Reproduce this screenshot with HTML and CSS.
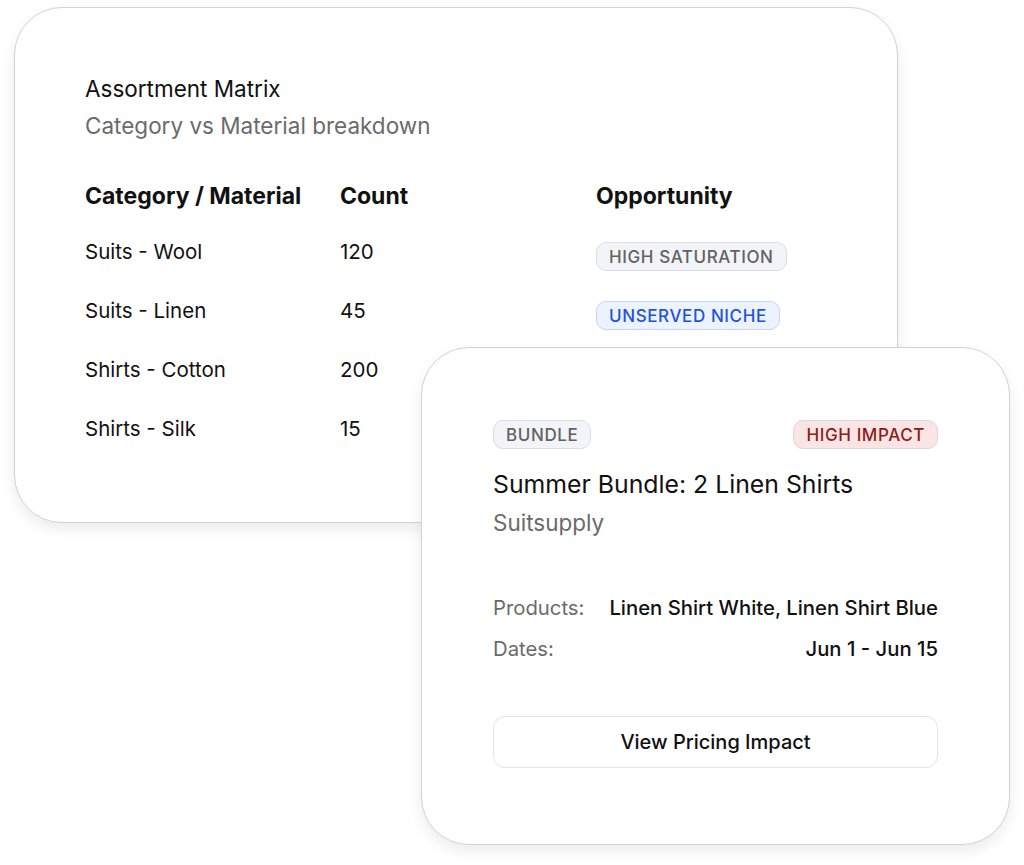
FILE: index.html
```html
<!DOCTYPE html>
<html lang="en">
<head>
<meta charset="utf-8">
<title>Assortment Matrix</title>
<link rel="stylesheet" href="styles.css">
</head>
<body>
<main class="canvas">
  <section class="card matrix">
    <h1 class="title">Assortment Matrix</h1>
    <p class="subtitle">Category vs Material breakdown</p>
    <div class="table">
      <div class="row head">
        <span>Category / Material</span>
        <span>Count</span>
        <span>Opportunity</span>
      </div>
      <div class="row">
        <span>Suits - Wool</span>
        <span>120</span>
        <span class="badge-cell"><span class="badge gray">High Saturation</span></span>
      </div>
      <div class="row">
        <span>Suits - Linen</span>
        <span>45</span>
        <span class="badge-cell"><span class="badge blue">Unserved Niche</span></span>
      </div>
      <div class="row">
        <span>Shirts - Cotton</span>
        <span>200</span>
        <span></span>
      </div>
      <div class="row">
        <span>Shirts - Silk</span>
        <span>15</span>
        <span></span>
      </div>
    </div>
  </section>

  <section class="card bundle">
    <div class="badges">
      <span class="badge gray">Bundle</span>
      <span class="badge red">High Impact</span>
    </div>
    <h2 class="bundle-title">Summer Bundle: 2 Linen Shirts</h2>
    <p class="brand">Suitsupply</p>
    <dl class="details">
      <div class="detail">
        <dt>Products:</dt>
        <dd>Linen Shirt White, Linen Shirt Blue</dd>
      </div>
      <div class="detail">
        <dt>Dates:</dt>
        <dd>Jun 1 - Jun 15</dd>
      </div>
    </dl>
    <button class="action" type="button">View Pricing Impact</button>
  </section>
</main>
</body>
</html>
```

FILE: styles.css
```css
* {
  box-sizing: border-box;
}

html, body {
  margin: 0;
  padding: 0;
  background: #ffffff;
}

body {
  font-family: "Inter", "Liberation Sans", sans-serif;
  color: #111111;
  width: 1024px;
  height: 865px;
  overflow: hidden;
}

.canvas {
  position: relative;
  width: 1024px;
  height: 865px;
  padding: 7px 0 0 14px;
}

.card {
  background: #ffffff;
  border: 1px solid #d2d2d2;
  border-radius: 48px;
  box-shadow: 0 6px 14px rgba(0, 0, 0, 0.08);
}

.matrix {
  width: 884px;
  height: 516px;
  padding: 65px 70px;
}

.title {
  margin: 0 0 6px;
  font-size: 22.5px;
  font-weight: 400;
  line-height: 31px;
  color: #111111;
}

.subtitle {
  margin: 0;
  font-size: 22.5px;
  line-height: 31px;
  color: #6b6b6b;
}

.table {
  margin-top: 29px;
}

.row {
  display: grid;
  grid-template-columns: 255px 256px 1fr;
  align-items: center;
  height: 59px;
  font-size: 20.5px;
  color: #111111;
}

.row.head {
  height: 52px;
  font-size: 23px;
  font-weight: 700;
}

.badge-cell {
  display: flex;
  margin-top: 10px;
}

.badge {
  display: inline-flex;
  align-items: center;
  height: 29px;
  padding: 0 12px;
  border-radius: 10px;
  border: 1px solid;
  font-size: 17px;
  font-weight: 500;
  letter-spacing: 0.6px;
  text-transform: uppercase;
}

.badge.gray {
  background: #f2f4f8;
  border-color: #d9dde6;
  color: #626262;
}

.badge.blue {
  background: #ecf2fe;
  border-color: #c4d5f8;
  color: #2352d9;
}

.badge.red {
  background: #fbe4e4;
  border-color: #dcd4ea;
  color: #8c1c1c;
}

.bundle {
  position: absolute;
  left: 421px;
  top: 347px;
  width: 589px;
  padding: 72px 71px 76px;
}

.badges {
  display: flex;
  justify-content: space-between;
  align-items: center;
}

.bundle-title {
  margin: 18px 0 0;
  font-size: 24.8px;
  font-weight: 400;
  line-height: 34px;
  color: #111111;
}

.brand {
  margin: 7px 0 0;
  font-size: 22.5px;
  line-height: 30px;
  color: #6b6b6b;
}

.details {
  margin: 49px 0 0;
}

.detail {
  display: flex;
  justify-content: space-between;
  align-items: center;
  height: 41px;
  font-size: 20.3px;
}

.detail dt {
  color: #6b6b6b;
}

.detail dd {
  margin: 0;
  font-weight: 500;
  color: #111111;
}

.action {
  display: block;
  width: 100%;
  height: 52px;
  margin-top: 47px;
  background: #ffffff;
  border: 1px solid #e4e4e7;
  border-radius: 12px;
  font-family: inherit;
  font-size: 20px;
  font-weight: 500;
  color: #111111;
}
```
